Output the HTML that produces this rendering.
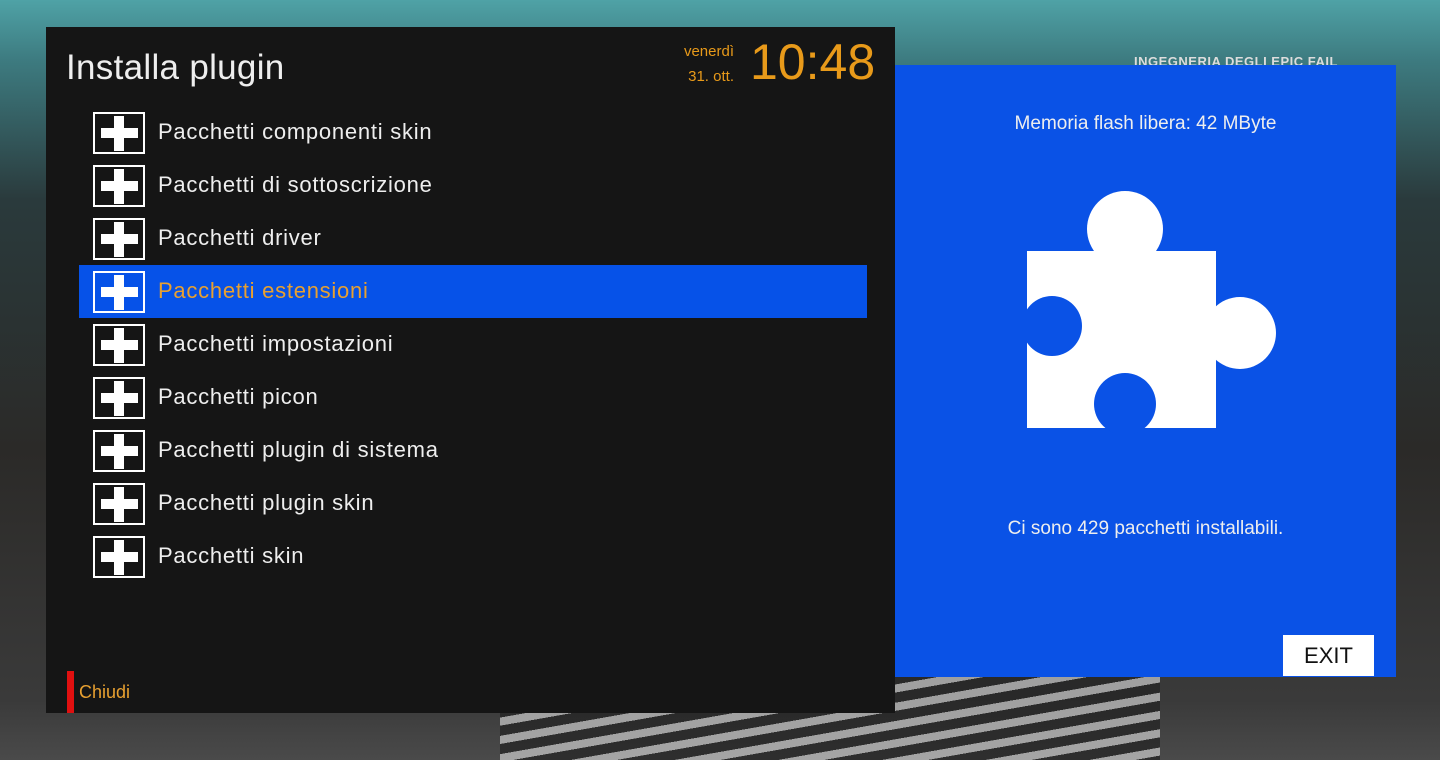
<!DOCTYPE html><html><head><style>
body{margin:0;width:1440px;height:760px;overflow:hidden;position:relative;font-family:"Liberation Sans",sans-serif;
background:linear-gradient(180deg,#4fa2a6 0px,#3d7b80 60px,#2a3a3c 200px,#2b2a28 450px,#3a3a3a 700px,#4a4a4a 760px);}
.shirt{position:absolute;left:500px;top:480px;width:660px;height:280px;background:repeating-linear-gradient(170deg,#ccc 0 8px,#222 8px 18px);opacity:.7}
.left{position:absolute;left:46px;top:27px;width:849px;height:686px;background:#151515}
.title{position:absolute;left:20px;top:21px;color:#eee;font-size:35px;letter-spacing:.3px}
.row{position:absolute;left:47px;height:42px;width:800px}
.box{position:absolute;left:0;top:0;width:48px;height:38px;border:2px solid #fff}
.box:before{content:"";position:absolute;left:6px;top:14px;width:37px;height:10px;background:#fff}
.box:after{content:"";position:absolute;left:19px;top:2px;width:10px;height:35px;background:#fff}
.row span{position:absolute;left:65px;top:7px;color:#eee;font-size:22px;letter-spacing:.75px}
.hl{position:absolute;left:33px;top:238px;width:788px;height:53px;background:#0652e8}
.right{position:absolute;left:895px;top:65px;width:501px;height:612px;background:#0a52e6}
</style></head><body>
<div class="shirt"></div>
<div style="position:absolute;left:1134px;top:54px;color:#ddd;font-size:13px;font-weight:bold;letter-spacing:.5px">INGEGNERIA DEGLI EPIC FAIL</div>
<div class="left">
<div class="title">Installa plugin</div>
<div style="position:absolute;left:632px;top:12px;color:#e89a1a;font-size:15px;text-align:right;width:56px;line-height:25px">venerdì<br>31. ott.</div>
<div style="position:absolute;left:704px;top:6px;color:#e89a1a;font-size:50px">10:48</div>
<div class="hl"></div>
<div class="row" style="top:85px"><div class="box"></div><span>Pacchetti componenti skin</span></div>
<div class="row" style="top:138px"><div class="box"></div><span>Pacchetti di sottoscrizione</span></div>
<div class="row" style="top:191px"><div class="box"></div><span>Pacchetti driver</span></div>
<div class="row" style="top:244px"><div class="box"></div><span style="color:#e8a030">Pacchetti estensioni</span></div>
<div class="row" style="top:297px"><div class="box"></div><span>Pacchetti impostazioni</span></div>
<div class="row" style="top:350px"><div class="box"></div><span>Pacchetti picon</span></div>
<div class="row" style="top:403px"><div class="box"></div><span>Pacchetti plugin di sistema</span></div>
<div class="row" style="top:456px"><div class="box"></div><span>Pacchetti plugin skin</span></div>
<div class="row" style="top:509px"><div class="box"></div><span>Pacchetti skin</span></div>
<div style="position:absolute;left:21px;top:644px;width:7px;height:42px;background:#e01010"></div>
<div style="position:absolute;left:33px;top:655px;color:#e8a030;font-size:18px">Chiudi</div>
</div>
<div class="right">
<div style="position:absolute;left:0;width:501px;top:48px;text-align:center;color:#eee;font-size:19px">Memoria flash libera: 42 MByte</div>
<svg style="position:absolute;left:0;top:0" width="501" height="612">
<g fill="#fff"><rect x="132" y="186" width="189" height="177"/><circle cx="230" cy="164" r="38"/><circle cx="345" cy="268" r="36"/></g>
<g fill="#0a52e6"><circle cx="157" cy="261" r="30"/><circle cx="230" cy="339" r="31"/></g>
</svg>
<div style="position:absolute;left:0;width:501px;top:453px;text-align:center;color:#eee;font-size:19px">Ci sono 429 pacchetti installabili.</div>
<div style="position:absolute;left:388px;top:570px;width:91px;height:41px;background:#fff;color:#111;font-size:22px;text-align:center;line-height:42px">EXIT</div>
</div>
</body></html>
